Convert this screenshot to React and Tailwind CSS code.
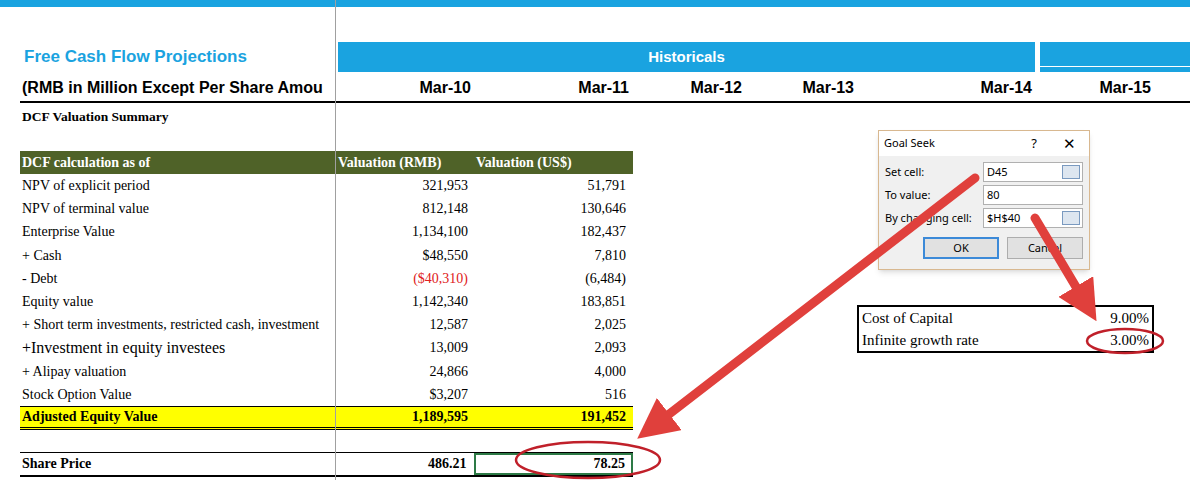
import React from "react";

const rows = [
  ["NPV of explicit period", "321,953", "51,791"],
  ["NPV of terminal value", "812,148", "130,646"],
  ["Enterprise Value", "1,134,100", "182,437"],
  ["+ Cash", "$48,550", "7,810"],
  ["- Debt", "($40,310)", "(6,484)", "red"],
  ["Equity value", "1,142,340", "183,851"],
  ["+ Short term investments, restricted cash, investment", "12,587", "2,025"],
  ["+Investment in equity investees", "13,009", "2,093", "big"],
  ["+ Alipay valuation", "24,866", "4,000"],
  ["Stock Option Value", "$3,207", "516"],
];

export default function App() {
  const serif = { fontFamily: '"Liberation Serif", serif' };
  const sans = { fontFamily: '"Liberation Sans", Arial, sans-serif' };
  return (
    <div className="relative w-[1190px] h-[480px] overflow-hidden bg-white" style={serif}>
      <div className="h-[7px] bg-[#1aa3e0]" />
      <div className="absolute left-[335px] top-0 h-[480px] w-px bg-[#a0a0a0]" />
      <div className="flex mt-[35px] h-[30px]">
        <div className="w-[335px] pl-[24px] pt-[2px] text-[17px] font-bold text-[#1aa3e0]" style={sans}>Free Cash Flow Projections</div>
        <div className="flex-1 flex ml-[3px]">
          <div className="w-[697px] bg-[#1aa3e0] flex flex-col">
            <div className="flex-1 text-center text-white font-bold text-[15px] pt-[4px]" style={sans}>Historicals</div>
            <div className="h-[1px] bg-white mb-[5px] ml-[2px]" />
          </div>
          <div className="w-[5px]" />
          <div className="flex-1 bg-[#1aa3e0] flex flex-col">
            <div className="flex-1" />
            <div className="h-[1px] bg-white mb-[5px]" />
          </div>
        </div>
      </div>
      <div className="flex h-[31px] items-end border-b-2 border-black ml-[20px] text-[16px] font-bold pb-[1px]" style={sans}>
        <div className="w-[315px] whitespace-nowrap overflow-hidden pl-[2px]">(RMB in Million Except Per Share Amou</div>
        <div className="w-[136px] text-right">Mar-10</div>
        <div className="w-[158px] text-right">Mar-11</div>
        <div className="w-[113px] text-right">Mar-12</div>
        <div className="w-[112px] text-right">Mar-13</div>
        <div className="w-[178px] text-right">Mar-14</div>
        <div className="w-[119px] text-right">Mar-15</div>
      </div>
      <div className="pl-[22px] pt-[4px] text-[13.5px] font-bold h-[48px]">DCF Valuation Summary</div>
      <div className="ml-[20px] w-[613px]">
        <div className="flex h-[23px] items-end bg-[#4f6228] text-white font-bold text-[14px] pb-[1px]">
          <div className="w-[316px] pl-[2px]">DCF calculation as of</div>
          <div className="w-[140px] pl-[2px]">Valuation (RMB)</div>
          <div className="flex-1">Valuation (US$)</div>
        </div>
        {rows.map(([l, a, b, k]) => (
          <div key={l} className="flex h-[23.2px] items-center text-[14px]">
            <div className={`w-[316px] pl-[2px] whitespace-nowrap ${k === "big" ? "text-[16px]" : ""}`}>{l}</div>
            <div className={`w-[132px] text-right ${k === "red" ? "text-[#e02020]" : ""}`}>{a}</div>
            <div className="w-[158px] text-right">{b}</div>
          </div>
        ))}
        <div className="flex h-[24px] items-center text-[14px] font-bold bg-[#ffff00] border-t border-black border-b-[3px] border-double">
          <div className="w-[316px] pl-[2px]">Adjusted Equity Value</div>
          <div className="w-[132px] text-right">1,189,595</div>
          <div className="w-[158px] text-right">191,452</div>
        </div>
        <div className="h-[22px]" />
        <div className="flex h-[25px] items-center text-[14px] font-bold border-t border-black border-b-2">
          <div className="w-[316px] pl-[2px]">Share Price</div>
          <div className="w-[132px] text-right">486.21</div>
          <div className="w-[160px] ml-[7px] h-full flex items-center justify-end pr-[6px] border-2 border-[#2d7a46]">78.25</div>
        </div>
      </div>

      <div className="absolute left-[878px] top-[130px] w-[212px] h-[140px] bg-[#f0f0f0] border border-[#d8b890] shadow-md text-[11px]" style={{ fontFamily: '"Noto Sans", sans-serif' }}>
        <div className="flex h-[25px] items-center bg-white px-[5px]">
          <span className="flex-1">Goal Seek</span>
          <span className="w-[40px] text-center text-[13px]">?</span>
          <span className="w-[30px] text-center text-[15px]">✕</span>
        </div>
        <div className="px-[6px] pt-[6px] flex flex-col gap-[3px]">
          {[["Set cell:", "D45", true], ["To value:", "80", false], ["By changing cell:", "$H$40", true]].map(([l, v, ic]) => (
            <div key={l} className="flex items-center h-[20px]">
              <span className="w-[98px]">{l}</span>
              <div className="flex-1 h-[20px] bg-white border border-[#b0b0b0] flex items-center">
                <span className="flex-1 pl-[3px]">{v}</span>
                {ic && <span className="w-[18px] h-[14px] mr-[2px] bg-[#dde6f0] border border-[#7a9ac0]" />}
              </div>
            </div>
          ))}
          <div className="flex gap-[8px] pl-[38px] pt-[6px]">
            <div className="w-[76px] h-[22px] border-2 border-[#3c8ad8] bg-[#e1e1e1] flex items-center justify-center">OK</div>
            <div className="w-[76px] h-[22px] border border-[#adadad] bg-[#e1e1e1] flex items-center justify-center">Cancel</div>
          </div>
        </div>
      </div>

      <div className="absolute left-[857px] top-[305px] w-[297px] border-2 border-black text-[15px] leading-[22px]">
        <div className="flex px-[3px]"><span className="flex-1">Cost of Capital</span><span>9.00%</span></div>
        <div className="flex px-[3px]"><span className="flex-1">Infinite growth rate</span><span>3.00%</span></div>
      </div>

      <svg className="absolute left-0 top-0 pointer-events-none" width="1190" height="480">
        <defs>
          <marker id="ah" markerWidth="4.5" markerHeight="4.5" refX="2" refY="2.25" orient="auto" markerUnits="strokeWidth">
            <path d="M0,0 L4.5,2.25 L0,4.5 Z" fill="#e0403c" />
          </marker>
        </defs>
        <line x1="975" y1="178" x2="655" y2="425" stroke="#e0403c" strokeWidth="9" strokeLinecap="round" markerEnd="url(#ah)" />
        <line x1="1035" y1="218" x2="1085" y2="302" stroke="#e0403c" strokeWidth="9" strokeLinecap="round" markerEnd="url(#ah)" />
        <ellipse cx="588" cy="460" rx="72" ry="18" fill="none" stroke="#c0202a" strokeWidth="2.5" />
        <ellipse cx="1125" cy="341" rx="38" ry="12" fill="none" stroke="#c0202a" strokeWidth="2.5" />
      </svg>
    </div>
  );
}
